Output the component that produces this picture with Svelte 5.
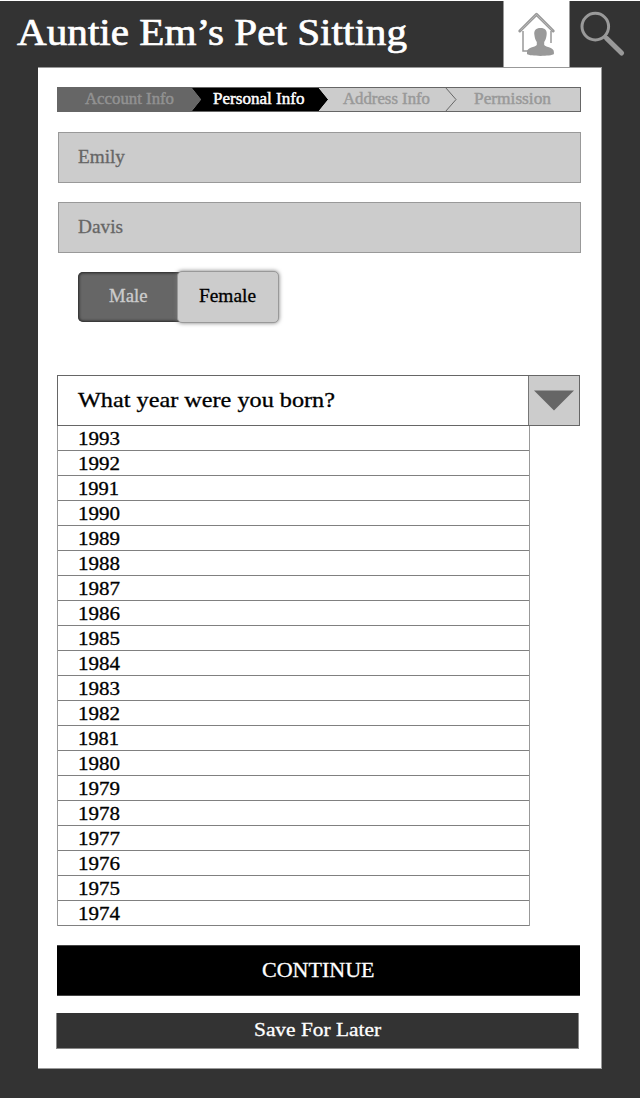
<script>
  const years = Array.from({ length: 20 }, (_, i) => 1993 - i);
</script>

{#snippet label(text, width, size)}
  <svg class="label" {width} height="20" aria-label={text}>
    <text x="0" y="15" font-size={size} textLength={width} lengthAdjust="spacingAndGlyphs">{text}</text>
  </svg>
{/snippet}

<div class="page">
  <header>
    <h1>{@render label('Auntie Em’s Pet Sitting', 390, 37.5)}</h1>
    <div class="home">
      <svg width="65" height="67" viewBox="504 1 65 67">
        <path d="M523 31V51H528M551 31V43" fill="none" stroke="#999" stroke-width="1.5" />
        <path d="M519.8 31L536.5 14.4L553.2 31" fill="none" stroke="#999" stroke-width="3" stroke-linecap="round" stroke-linejoin="round" />
        <path d="M520.5 30.4L536.5 14.5L552.5 30.4" fill="none" stroke="#ccc" stroke-width=".6" />
        <path d="M534.4 35C533.6 30.5 536 28 540.5 28C545 28 547.4 30.5 546.6 35C546.3 38.5 545.2 40.5 544.2 42V45C546 47.6 553.9 47 553.9 52V54C551 56.5 530 56.5 527 54V52C527 47 535 47.6 536.8 45V42C535.8 40.5 534.7 38.5 534.4 35Z" fill="#999" />
      </svg>
    </div>
    <div class="search">
      <svg width="70" height="67" viewBox="570 1 70 67">
        <circle cx="595.3" cy="26.6" r="13.3" fill="none" stroke="#999" stroke-width="3" />
        <path d="M604.2 36L607 38.8" stroke="#999" stroke-width="3.5" />
        <path d="M606.5 38.3L621.6 53" stroke="#999" stroke-width="5" stroke-linecap="round" />
      </svg>
    </div>
  </header>

  <main>
    <nav>
      <div class="step done">{@render label('Account Info', 89, 16)}</div>
      <div class="step current">{@render label('Personal Info', 91.5, 16)}</div>
      <div class="step next">{@render label('Address Info', 87, 16)}</div>
      <div class="step last">{@render label('Permission', 77, 16)}</div>
      <svg class="arrows" width="524" height="25" viewBox="57 87 524 25">
        <path d="M57 87H191L201 99.5L191 112H57Z" fill="#666" />
        <path d="M191 87H318L328.2 99.5L318 112H191L201 99.5Z" fill="#000" />
        <path d="M318 87H581V112H318L328.2 99.5Z" fill="#ccc" />
        <path d="M445.5 87.5L456 99.5L445.5 111.5" fill="none" stroke="#666" />
        <rect x="57.5" y="87.5" width="523" height="24" fill="none" stroke="#666" />
      </svg>
    </nav>

    <div class="field">{@render label('Emily', 47, 18.5)}</div>
    <div class="field">{@render label('Davis', 45, 18.5)}</div>

    <div class="gender">
      <div class="male">{@render label('Male', 38.5, 18.5)}</div>
      <div class="female">{@render label('Female', 57, 18.5)}</div>
    </div>

    <div class="select">
      <div class="question">{@render label('What year were you born?', 257, 21)}</div>
      <div class="drop">
        <svg width="40" height="21"><path d="M0 .5H40L20 20.5Z" fill="#666" /></svg>
      </div>
    </div>
    <div class="years">
      {#each years as year}
        <div class="year">{@render label(String(year), year % 10 === 1 ? 41 : 42, 18)}</div>
      {/each}
    </div>

    <div class="continue">{@render label('CONTINUE', 112.5, 21)}</div>
    <div class="later">{@render label('Save For Later', 127, 19)}</div>
  </main>
</div>

<style>
  :global(body) { background: #333; }
  * { box-sizing: border-box; }
  .page {
    width: 640px;
    height: 1098px;
    padding-left: 38px;
    background: #333;
    border-top: 1px solid #fff;
    font-family: "Liberation Serif", serif;
  }
  svg { display: block; }
  .label { overflow: visible; flex: none; }
  .label text { fill: currentColor; stroke: currentColor; stroke-width: 0.3px; }
  header { display: flex; height: 66px; margin-left: -38px; }
  h1 {
    margin: 0;
    width: 503px;
    padding: 29px 0 0 17px;
    color: #fff;
    font-weight: normal;
  }
  h1 .label text { stroke-width: 0.7px; }
  .home { width: 67px; height: 66px; background: #fff; border: solid #999; border-width: 0 1px; }
  .search { width: 70px; }
  main {
    width: 564px;
    height: 1002px;
    padding: 19px 0 0 19px;
    background: #fff;
    border: solid #999;
    border-width: 1px 1px 1px 0;
  }
  nav { position: relative; display: flex; width: 524px; height: 25px; }
  .arrows { position: absolute; inset: 0; z-index: 0; }
  .step { position: relative; z-index: 1; padding-top: 1.5px; }
  .step .label text { stroke-width: 0.45px; }
  .done { width: 156px; padding-left: 28px; color: #929292; }
  .current { width: 130px; color: #fff; }
  .next { width: 131px; color: #999; }
  .last { color: #999; }
  .field {
    width: 523px;
    height: 51px;
    margin: 20px 0 0 1px;
    padding: 14.5px 0 0 19px;
    background: #ccc;
    border: 1px solid #999;
    color: #666;
  }
  .field + .field { margin-top: 19px; }
  .gender { display: flex; height: 51px; margin: 18px 0 0 21px; }
  .male {
    width: 106px;
    height: 50px;
    margin-top: 1px;
    padding: 15px 0 0 31px;
    border-radius: 5px;
    background: #666;
    box-shadow: inset 0 0 3px 1px #222;
    color: #ccc;
  }
  .female {
    position: relative;
    width: 102px;
    height: 52px;
    margin-left: -7px;
    padding: 15px 0 0 21px;
    border: 1px solid #999;
    border-radius: 5px;
    background: #ccc;
    box-shadow: 0 0 4px #777;
    color: #000;
  }
  .select { display: flex; width: 523px; height: 51px; margin: 53px 0 0 0.4px; border: 1px solid #666; }
  .question { width: 471px; padding: 16px 0 0 19.4px; border-right: 1px solid #777; }
  .drop { width: 50px; padding: 14px 0 0 5px; background: #ccc; }
  .years { width: 473px; margin-left: 0.4px; border: solid #999; border-width: 0 1px; }
  .year { height: 25px; padding: 4px 0 0 19.4px; border-bottom: 1px solid #808080; }
  .continue, .later { display: flex; justify-content: center; width: 523px; color: #fff; }
  .continue { height: 51px; margin-top: 19px; padding-top: 16px; background: #000; border: solid #444; border-width: 1px 0; }
  .later { height: 36px; margin: 17px 0 0 -1px; padding-top: 8px; background: #333; border: solid #888; border-width: 0 1px 1px; }
</style>
